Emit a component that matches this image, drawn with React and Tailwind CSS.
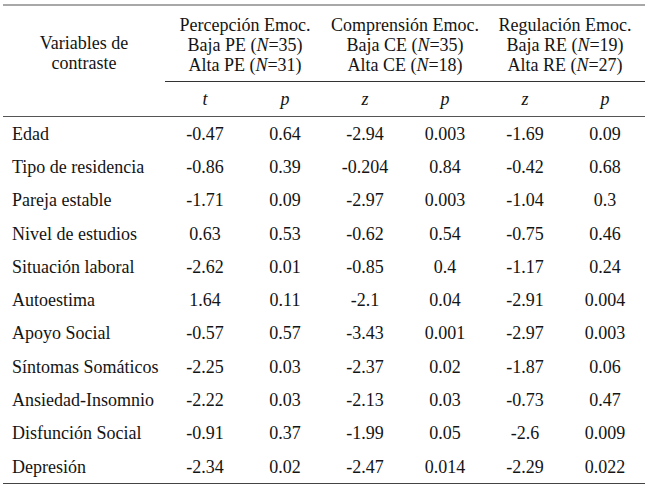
import React from "react";

// group headers
const groups = [
  { title: "Percepción Emoc.", code: "PE", low: 35, high: 31, stat: "t" },
  { title: "Comprensión Emoc.", code: "CE", low: 35, high: 18, stat: "z" },
  { title: "Regulación Emoc.", code: "RE", low: 19, high: 27, stat: "z" },
];

const rows = [
  ["Edad", "-0.47", "0.64", "-2.94", "0.003", "-1.69", "0.09"],
  ["Tipo de residencia", "-0.86", "0.39", "-0.204", "0.84", "-0.42", "0.68"],
  ["Pareja estable", "-1.71", "0.09", "-2.97", "0.003", "-1.04", "0.3"],
  ["Nivel de estudios", "0.63", "0.53", "-0.62", "0.54", "-0.75", "0.46"],
  ["Situación laboral", "-2.62", "0.01", "-0.85", "0.4", "-1.17", "0.24"],
  ["Autoestima", "1.64", "0.11", "-2.1", "0.04", "-2.91", "0.004"],
  ["Apoyo Social", "-0.57", "0.57", "-3.43", "0.001", "-2.97", "0.003"],
  ["Síntomas Somáticos", "-2.25", "0.03", "-2.37", "0.02", "-1.87", "0.06"],
  ["Ansiedad-Insomnio", "-2.22", "0.03", "-2.13", "0.03", "-0.73", "0.47"],
  ["Disfunción Social", "-0.91", "0.37", "-1.99", "0.05", "-2.6", "0.009"],
  ["Depresión", "-2.34", "0.02", "-2.47", "0.014", "-2.29", "0.022"],
];

export default function App() {
  return (
    <div className="w-[650px] h-[489px] bg-white overflow-hidden pt-[4px] font-[family-name:Liberation_Serif,serif] text-[18px] text-[#141414]">
      <div className="ml-[3px] w-[642px] border-t-2 border-[#a8a8a8] border-b border-b-[#444]">
        {/* header */}
        <div className="grid grid-cols-[162px_repeat(3,160px)] border-b border-[#555]">
          <div className="row-span-2 pt-[27px] text-center leading-[20px]">
            Variables de
            <br />
            contraste
          </div>
          {groups.map((g) => (
            <div
              key={g.code}
              className="pt-[9px] pb-[6px] text-center leading-[20px] border-b border-[#333]"
            >
              <div>{g.title}</div>
              <div>
                Baja {g.code} (<i>N</i>={g.low})
              </div>
              <div>
                Alta {g.code} (<i>N</i>={g.high})
              </div>
            </div>
          ))}
          {groups.map((g) => (
            <div key={g.code + "-sub"} className="grid grid-cols-2 h-[34px] items-center italic text-center">
              <span>{g.stat}</span>
              <span>p</span>
            </div>
          ))}
        </div>
        {/* body */}
        {rows.map((r) => (
          <div
            key={r[0]}
            className="grid grid-cols-[162px_repeat(6,80px)] h-[33.3px] items-center leading-none"
          >
            <span className="pl-[9px] whitespace-nowrap">{r[0]}</span>
            {r.slice(1).map((v, i) => (
              <span key={i} className="text-center">
                {v}
              </span>
            ))}
          </div>
        ))}
      </div>
    </div>
  );
}
